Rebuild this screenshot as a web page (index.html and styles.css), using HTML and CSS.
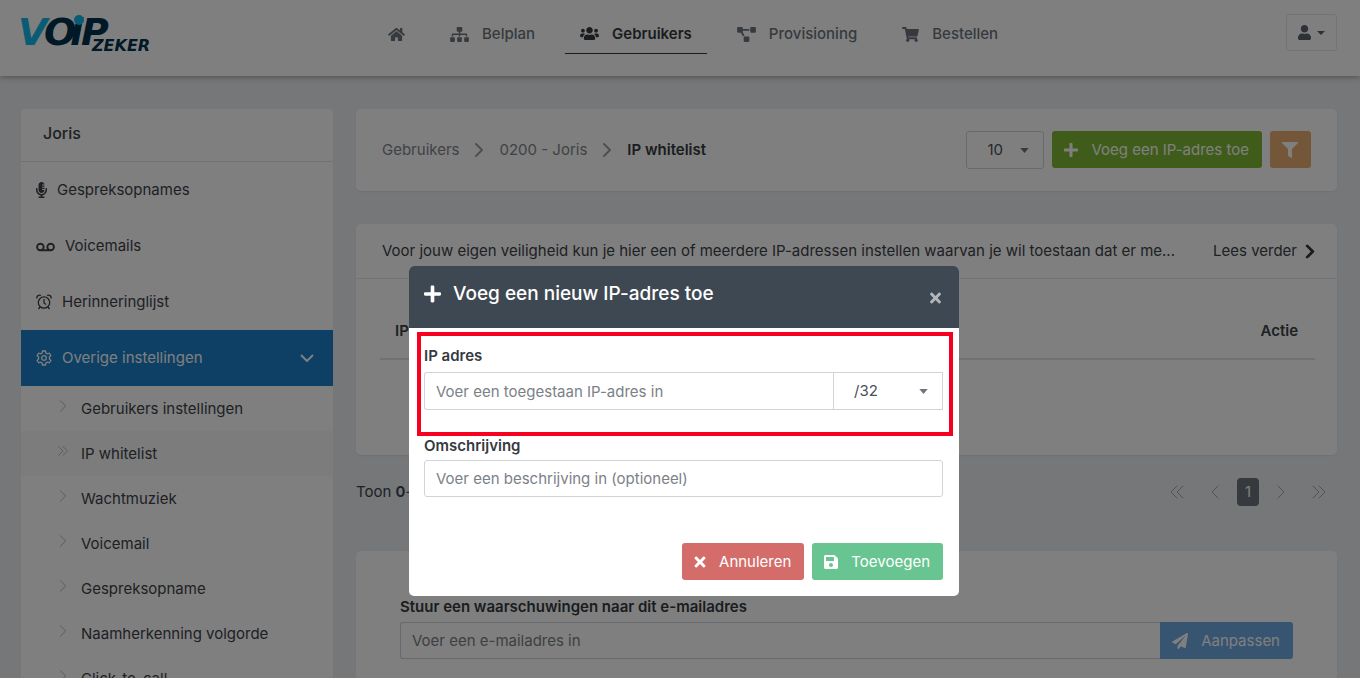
FILE: index.html
```html
<!DOCTYPE html>
<html lang="nl">
<head>
<meta charset="utf-8">
<title>VoIPZeker - IP whitelist</title>
<link rel="stylesheet" href="styles.css">
</head>
<body>
<svg class="sprite" aria-hidden="true">
  <symbol id="plus" viewBox="0 0 448 512"><path d="M416 208H272V64c0-17.67-14.33-32-32-32h-32c-17.67 0-32 14.33-32 32v144H32c-17.67 0-32 14.33-32 32v32c0 17.67 14.33 32 32 32h144v144c0 17.67 14.33 32 32 32h32c17.67 0 32-14.33 32-32V304h144c17.67 0 32-14.33 32-32v-32c0-17.67-14.33-32-32-32z"/></symbol>
  <symbol id="times" viewBox="0 0 352 512"><path d="M242.72 256l100.07-100.07c12.28-12.28 12.28-32.19 0-44.48l-22.24-22.24c-12.28-12.28-32.19-12.28-44.48 0L176 189.28 75.93 89.21c-12.28-12.28-32.19-12.28-44.48 0L9.21 111.45c-12.28 12.28-12.28 32.19 0 44.48L109.28 256 9.21 356.07c-12.28 12.28-12.28 32.19 0 44.48l22.24 22.24c12.28 12.28 32.2 12.28 44.48 0L176 322.72l100.07 100.07c12.28 12.28 32.2 12.28 44.48 0l22.24-22.24c12.28-12.28 12.28-32.19 0-44.48L242.72 256z"/></symbol>
  <symbol id="chevron" viewBox="0 0 10 16"><path d="M2 2l6 6-6 6" fill="none" stroke="currentColor" stroke-linecap="round" stroke-linejoin="round"/></symbol>
  <symbol id="double" viewBox="0 0 16 16"><path d="M2 2l6 6-6 6M8 2l6 6-6 6" fill="none" stroke="currentColor" stroke-linecap="round" stroke-linejoin="round"/></symbol>
</svg>

<header class="topbar">
  <a class="logo" href="#" aria-label="VoIPZeker">
    <svg width="136" height="40" viewBox="0 0 136 40">
      <text class="logo-word logo-navy" x="23" y="31">O</text>
      <text class="logo-word logo-cyan" x="-3" y="31">V</text>
      <text class="logo-word logo-navy" x="49" y="31">i</text>
      <text class="logo-word logo-navy" x="60" y="31">P</text>
      <circle class="logo-cyan" cx="58" cy="6" r="5"/>
      <text class="logo-sub logo-navy" x="71" y="37">ZEKER</text>
    </svg>
  </a>
  <nav class="nav">
    <a class="nav-link" href="#" aria-label="Home"><svg width="17" height="15" viewBox="0 0 576 512"><path d="M280.37 148.26L96 300.11V464a16 16 0 0 0 16 16l112.06-.29a16 16 0 0 0 15.92-16V368a16 16 0 0 1 16-16h64a16 16 0 0 1 16 16v95.64a16 16 0 0 0 16 16.05L464 480a16 16 0 0 0 16-16V300L295.67 148.26a12.19 12.19 0 0 0-15.3 0zM571.6 251.47L488 182.56V44.05a12 12 0 0 0-12-12h-56a12 12 0 0 0-12 12v72.61L318.47 43a48 48 0 0 0-61 0L4.34 251.47a12 12 0 0 0-1.6 16.9l25.5 31A12 12 0 0 0 45.15 301l235.22-193.74a12.19 12.19 0 0 1 15.3 0L530.9 301a12 12 0 0 0 16.9-1.6l25.5-31a12 12 0 0 0-1.7-16.93z"/></svg></a>
    <a class="nav-link" href="#"><svg width="19" height="15" viewBox="0 0 640 512"><path d="M128 352H32c-17.67 0-32 14.33-32 32v96c0 17.67 14.33 32 32 32h96c17.67 0 32-14.33 32-32v-96c0-17.67-14.33-32-32-32zm-24-80h192v48h48v-48h192v48h48v-57.59c0-21.17-17.23-38.41-38.41-38.41H344v-64h40c17.67 0 32-14.33 32-32V32c0-17.67-14.33-32-32-32H256c-17.67 0-32 14.33-32 32v96c0 17.67 14.33 32 32 32h40v64H94.41C73.23 224 56 241.23 56 262.41V320h48v-48zm264 80h-96c-17.67 0-32 14.33-32 32v96c0 17.67 14.33 32 32 32h96c17.67 0 32-14.33 32-32v-96c0-17.67-14.33-32-32-32zm240 0h-96c-17.67 0-32 14.33-32 32v96c0 17.67 14.33 32 32 32h96c17.67 0 32-14.33 32-32v-96c0-17.67-14.33-32-32-32z"/></svg>Belplan</a>
    <a class="nav-link active" href="#"><svg width="19" height="15" viewBox="0 0 640 512"><path d="M96 224c35.3 0 64-28.7 64-64s-28.7-64-64-64-64 28.7-64 64 28.7 64 64 64zm448 0c35.3 0 64-28.7 64-64s-28.7-64-64-64-64 28.7-64 64 28.7 64 64 64zm32 32h-64c-17.6 0-33.5 7.1-45.1 18.6 40.3 22.1 68.9 62 75.1 109.4h66c17.7 0 32-14.3 32-32v-32c0-35.3-28.7-64-64-64zm-256 0c61.9 0 112-50.1 112-112S381.9 32 320 32 208 82.1 208 144s50.1 112 112 112zm76.8 32h-8.3c-20.8 10-43.9 16-68.5 16s-47.6-6-68.5-16h-8.3C179.6 288 128 339.6 128 403.2V432c0 26.5 21.5 48 48 48h288c26.5 0 48-21.5 48-48v-28.8c0-63.6-51.6-115.2-115.2-115.2zm-223.7-13.4C161.5 263.1 145.6 256 128 256H64c-35.3 0-64 28.7-64 64v32c0 17.7 14.3 32 32 32h65.9c6.3-47.4 34.9-87.3 75.2-109.4z"/></svg>Gebruikers</a>
    <a class="nav-link" href="#"><svg width="19" height="15" viewBox="0 0 640 512"><path d="M384 320H256c-17.67 0-32 14.33-32 32v128c0 17.67 14.33 32 32 32h128c17.67 0 32-14.33 32-32V352c0-17.67-14.33-32-32-32zM192 32c0-17.67-14.33-32-32-32H32C14.33 0 0 14.33 0 32v128c0 17.67 14.33 32 32 32h95.72l73.16 128.04C211.98 300.98 232.4 288 256 288h.28L192 175.51V128h224V64H192V32zM608 0H480c-17.67 0-32 14.33-32 32v128c0 17.67 14.33 32 32 32h128c17.67 0 32-14.33 32-32V32c0-17.67-14.33-32-32-32z"/></svg>Provisioning</a>
    <a class="nav-link" href="#"><svg width="17" height="15" viewBox="0 0 576 512"><path d="M528.12 301.319l47.273-208C578.806 78.301 567.391 64 551.99 64H159.208l-9.166-44.81C147.758 8.021 137.93 0 126.529 0H24C10.745 0 0 10.745 0 24v16c0 13.255 10.745 24 24 24h69.883l70.248 343.435C147.325 417.1 136 435.222 136 456c0 30.928 25.072 56 56 56s56-25.072 56-56c0-15.674-6.447-29.835-16.824-40h209.647C430.447 426.165 424 440.326 424 456c0 30.928 25.072 56 56 56s56-25.072 56-56c0-22.172-12.888-41.332-31.579-50.405l5.517-24.276c3.413-15.018-8.002-29.319-23.403-29.319H218.117l-6.545-32h293.145c11.206 0 20.92-7.754 23.403-18.681z"/></svg>Bestellen</a>
  </nav>
  <button class="user-button" type="button" aria-label="Account"><svg width="13" height="15" viewBox="0 0 448 512"><path d="M224 256c70.7 0 128-57.3 128-128S294.7 0 224 0 96 57.3 96 128s57.3 128 128 128zm89.6 32h-16.7c-22.2 10.2-46.9 16-72.9 16s-50.6-5.8-72.9-16h-16.7C60.2 288 0 348.2 0 422.4V464c0 26.5 21.5 48 48 48h352c26.5 0 48-21.5 48-48v-41.6c0-74.2-60.2-134.4-134.4-134.4z"/></svg><svg width="8" height="4" viewBox="0 0 8 4"><path d="M0 0h8L4 4z"/></svg></button>
</header>

<div class="layout">
  <aside class="sidebar">
    <h2 class="sidebar-title">Joris</h2>
    <a class="side-link" href="#"><svg width="11" height="16" viewBox="0 0 352 512"><path fill-rule="evenodd" d="M176 352c53.02 0 96-42.98 96-96h-76v-32h76v-40h-76v-32h76v-40h-76V80h76C264 34 227 0 176 0 123 0 80 42.98 80 96v160c0 53.02 42.98 96 96 96zm160-160h-16c-8.84 0-16 7.16-16 16v48c0 74.8-64.49 134.82-140.79 127.38C96.71 376.89 48 317.11 48 250.3V208c0-8.84-7.16-16-16-16H16c-8.84 0-16 7.16-16 16v40.16c0 89.64 63.97 169.55 152 181.69V464H96c-8.84 0-16 7.16-16 16v16c0 8.84 7.16 16 16 16h160c8.84 0 16-7.16 16-16v-16c0-8.84-7.16-16-16-16h-56v-33.77C285.71 418.47 352 344.9 352 256v-48c0-8.84-7.16-16-16-16z"/></svg>Gespreksopnames</a>
    <a class="side-link" href="#"><svg width="19" height="15" viewBox="0 0 640 512"><path d="M496 128a144 144 0 0 0-119.74 224H263.74A144 144 0 1 0 144 416h352a144 144 0 0 0 0-288zM64 272a80 80 0 1 1 80 80 80 80 0 0 1-80-80zm432 80a80 80 0 1 1 80-80 80 80 0 0 1-80 80z"/></svg>Voicemails</a>
    <a class="side-link" href="#"><svg class="line-icon" width="16" height="16" viewBox="0 0 16 16"><circle cx="8" cy="8.500" r="5.700"/><path d="M8 5v4l2 1.500M4 13l-1.500 2M12 13l1.500 2M1 4.500C.3 2 3 .3 5 1.500M15 4.500C15.700 2 13 .3 11 1.500"/></svg>Herinneringlijst</a>
    <a class="side-link current" href="#"><svg class="line-icon" width="16" height="16" viewBox="0 0 16 16"><path d="M6.500 1h3l.4 2 1.500.9 2-.7 1.500 2.500L13.400 7.100v1.800l1.500 1.400-1.500 2.500-2-.7-1.500.9-.4 2h-3l-.4-2-1.500-.9-2 .7-1.500-2.500L2.600 8.900V7.100L1.100 5.700l1.500-2.500 2 .7L6.100 3z"/><circle cx="8" cy="8" r="2.300"/></svg>Overige instellingen<svg class="side-arrow" width="14" height="8" viewBox="0 0 14 8"><path d="M1 1l6 6 6-6"/></svg></a>
    <ul class="submenu">
      <li><a class="sub-link" href="#"><svg class="sub-icon" width="12" height="14"><use href="#chevron"/></svg>Gebruikers instellingen</a></li>
      <li><a class="sub-link selected" href="#"><svg class="sub-icon" width="12" height="14"><use href="#double"/></svg>IP whitelist</a></li>
      <li><a class="sub-link" href="#"><svg class="sub-icon" width="12" height="14"><use href="#chevron"/></svg>Wachtmuziek</a></li>
      <li><a class="sub-link" href="#"><svg class="sub-icon" width="12" height="14"><use href="#chevron"/></svg>Voicemail</a></li>
      <li><a class="sub-link" href="#"><svg class="sub-icon" width="12" height="14"><use href="#chevron"/></svg>Gespreksopname</a></li>
      <li><a class="sub-link" href="#"><svg class="sub-icon" width="12" height="14"><use href="#chevron"/></svg>Naamherkenning volgorde</a></li>
      <li><a class="sub-link" href="#"><svg class="sub-icon" width="12" height="14"><use href="#chevron"/></svg>Click-to-call</a></li>
    </ul>
  </aside>

  <main class="content">
    <section class="card toolbar">
      <nav class="breadcrumb">
        <a href="#">Gebruikers</a><svg width="10" height="16"><use href="#chevron"/></svg>
        <a href="#">0200 - Joris</a><svg width="10" height="16"><use href="#chevron"/></svg>
        <strong>IP whitelist</strong>
      </nav>
      <div class="actions">
        <div class="select-wrap page-size">
          <select aria-label="Aantal per pagina"><option>10</option><option>25</option></select>
          <svg class="caret" width="9" height="5" viewBox="0 0 10 6"><path d="M0 0h10L5 6z"/></svg>
        </div>
        <button class="btn btn-add" type="button"><svg width="14" height="16"><use href="#plus"/></svg>Voeg een IP-adres toe</button>
        <button class="btn btn-filter" type="button" aria-label="Filter"><svg width="16" height="16" viewBox="0 0 512 512"><path d="M487.976 0H24.028C2.71 0-8.047 25.866 7.058 40.971L192 225.941V432c0 7.831 3.821 15.17 10.237 19.662l80 55.98C298.02 518.69 320 507.493 320 487.98V225.941l184.947-184.97C520.021 25.896 509.338 0 487.976 0z"/></svg></button>
      </div>
    </section>

    <section class="card list">
      <div class="notice">
        <p class="notice-text">Voor jouw eigen veiligheid kun je hier een of meerdere IP-adressen instellen waarvan je wil toestaan dat er me...</p>
        <a class="more" href="#">Lees verder<svg width="10" height="15"><use href="#chevron"/></svg></a>
      </div>
      <table class="ip-table">
        <thead><tr><th>IP adres</th><th>Omschrijving</th><th class="right">Actie</th></tr></thead>
      </table>
    </section>

    <div class="list-footer">
      <p class="count">Toon <b>0</b>-<b>0</b> van <b>0</b></p>
      <nav class="pagination" aria-label="Pagina's">
        <a class="edge" href="#" aria-label="Eerste"><svg class="flip" width="16" height="16"><use href="#double"/></svg></a>
        <a href="#" aria-label="Vorige"><svg class="flip" width="10" height="16"><use href="#chevron"/></svg></a>
        <a class="page" href="#">1</a>
        <a href="#" aria-label="Volgende"><svg width="10" height="16"><use href="#chevron"/></svg></a>
        <a class="edge" href="#" aria-label="Laatste"><svg width="16" height="16"><use href="#double"/></svg></a>
      </nav>
    </div>

    <section class="card mail">
      <label class="label" for="mail">Stuur een waarschuwingen naar dit e-mailadres</label>
      <div class="input-group">
        <input class="input" id="mail" type="email" placeholder="Voer een e-mailadres in">
        <button class="btn btn-mail" type="button"><svg width="16" height="16" viewBox="0 0 512 512"><path d="M476 3.200L12.500 270.600c-18.100 10.400-15.800 35.600 2.200 43.200L121 358.400l287.300-253.200c5.500-4.900 13.300 2.600 8.600 8.300L176 407v80.500c0 23.600 28.500 32.900 42.500 15.800L282 426l124.600 52.200c14.200 6 30.400-2.900 33-18.200l72-432C515 7.800 493.300-6.800 476 3.200z"/></svg>Aanpassen</button>
      </div>
    </section>
  </main>
</div>

<div class="overlay">
  <div class="modal" role="dialog" aria-modal="true" aria-labelledby="modal-title">
    <div class="modal-header">
      <svg width="17" height="20"><use href="#plus"/></svg>
      <h1 class="modal-title" id="modal-title">Voeg een nieuw IP-adres toe</h1>
      <button class="close" type="button" aria-label="Sluiten"><svg width="11" height="16"><use href="#times"/></svg></button>
    </div>
    <form class="modal-body">
      <div class="field highlighted">
        <label class="label" for="ip">IP adres</label>
        <div class="input-group">
          <input class="input" id="ip" type="text" placeholder="Voer een toegestaan IP-adres in">
          <div class="select-wrap mask">
            <select aria-label="Subnetmasker"><option>/32</option><option>/24</option></select>
            <svg class="caret" width="9" height="5" viewBox="0 0 10 6"><path d="M0 0h10L5 6z"/></svg>
          </div>
        </div>
      </div>
      <div class="field">
        <label class="label" for="description">Omschrijving</label>
        <input class="input" id="description" type="text" placeholder="Voer een beschrijving in (optioneel)">
      </div>
      <div class="modal-actions">
        <button class="btn btn-cancel" type="button"><svg width="12" height="16"><use href="#times"/></svg>Annuleren</button>
        <button class="btn btn-save" type="button"><svg width="14" height="16" viewBox="0 0 448 512"><path d="M433.941 129.941l-83.882-83.882A48 48 0 0 0 316.118 32H48C21.490 32 0 53.490 0 80v352c0 26.510 21.490 48 48 48h352c26.510 0 48-21.490 48-48V163.882a48 48 0 0 0-14.059-33.941zM224 416c-35.346 0-64-28.654-64-64 0-35.346 28.654-64 64-64s64 28.654 64 64c0 35.346-28.654 64-64 64zm96-304.520V212c0 6.627-5.373 12-12 12H76c-6.627 0-12-5.373-12-12V108c0-6.627 5.373-12 12-12h228.520c3.183 0 6.235 1.264 8.485 3.515l3.480 3.480A11.996 11.996 0 0 1 320 111.480z"/></svg>Toevoegen</button>
      </div>
    </form>
  </div>
</div>
</body>
</html>
```
FILE: styles.css
```css
* { box-sizing: border-box; }

body {
  margin: 0;
  height: 100vh;
  overflow: hidden;
  background: #ebeef3;
  color: #3c4248;
  font: 400 15px/20px Inter, "Liberation Sans", sans-serif;
}

a { color: inherit; text-decoration: none; }
svg { flex: none; fill: currentColor; }
button, input, select { font: inherit; }
.sprite { position: absolute; width: 0; height: 0; }

/* Top bar */
.topbar {
  display: grid;
  grid-template-columns: 352px 1fr auto;
  align-items: start;
  height: 76px;
  padding: 14px 23px 0 21px;
  background: #fff;
  box-shadow: 0 1px 6px rgba(0, 0, 0, .35);
}
.logo svg { display: block; overflow: visible; }
.logo-word { font: italic 700 38px "DejaVu Sans", sans-serif; }
.logo-sub { font: italic 700 16px "DejaVu Sans", sans-serif; }
.logo-navy { fill: #03324e; }
.logo-cyan { fill: #12b8e8; }
.nav { display: flex; gap: 15px; }
.nav-link {
  display: flex;
  align-items: center;
  gap: 13px;
  height: 40px;
  padding: 0 15px;
  color: #6c757d;
  font-weight: 500;
}
.nav-link.active { color: #343a40; font-weight: 600; border-bottom: 1px solid #343a40; }
.user-button {
  display: flex;
  align-items: center;
  justify-content: center;
  gap: 6px;
  width: 51px;
  height: 37px;
  border: 1px solid #e2e6ea;
  border-radius: 3px;
  background: #fff;
  color: #5c656e;
}

/* Page grid */
.layout {
  display: grid;
  grid-template-columns: 312px minmax(0, 1fr);
  gap: 23px;
  padding: 33px 23px 0 21px;
}

/* Sidebar */
.sidebar { background: #fff; border-radius: 4px; align-self: start; }
.sidebar-title {
  margin: 0;
  padding: 14px 22px 18px;
  border-bottom: 1px solid #e3e7ee;
  font-size: 16px;
  font-weight: 500;
  line-height: 20px;
}
.side-link {
  display: flex;
  align-items: center;
  gap: 10px;
  height: 56px;
  padding: 0 19px 0 15px;
}
.side-link.current { background: #1a80c8; color: #fff; }
.line-icon { fill: none; stroke: currentColor; stroke-width: 1.300; }
.side-arrow { margin-left: auto; fill: none; stroke: currentColor; stroke-width: 2; }
.submenu { margin: 0; padding: 0; list-style: none; }
.sub-link {
  display: flex;
  align-items: center;
  gap: 12px;
  height: 45px;
  padding: 0 36px;
}
.sub-link.selected { background: #f8f8f8; }
.sub-icon { color: #a4abb2; margin-bottom: 6px; }

/* Cards */
.card { background: #fff; border-radius: 5px; box-shadow: 0 1px 2px rgba(0, 0, 0, .06); }
.toolbar {
  display: flex;
  justify-content: space-between;
  align-items: center;
  height: 82px;
  padding: 0 26px;
}
.breadcrumb { display: flex; align-items: center; gap: 15px; color: #7d858c; }
.breadcrumb svg { color: #98a0a8; stroke-width: 2; }
.breadcrumb strong { color: #343a40; font-weight: 600; }
.actions { display: flex; gap: 8px; }

.btn {
  display: flex;
  align-items: center;
  justify-content: center;
  gap: 13px;
  height: 37px;
  padding: 0 13px 0 12px;
  border: 0;
  border-radius: 3px;
  color: #fff;
  white-space: nowrap;
}
.btn-add { background: #7fb935; }
.btn-filter { background: #e8ae70; }
.btn-mail { background: #6ea9e2; border-radius: 0 3px 3px 0; }
.btn-cancel { background: #d46d6a; }
.btn-save { background: #68c591; }

.select-wrap { position: relative; }
.select-wrap select {
  width: 100%;
  height: 38px;
  padding: 0 20px;
  border: 1px solid #ced4da;
  border-radius: 3px;
  background: #fff;
  color: #495057;
  appearance: none;
}
.caret { position: absolute; right: 15px; top: 17px; color: #6c757d; }
.page-size { width: 78px; }

.list { margin-top: 33px; height: 231px; padding-bottom: 96px; }
.notice {
  display: flex;
  align-items: center;
  gap: 16px;
  height: 55px;
  padding: 0 22px 0 26px;
  border-bottom: 1px solid #e6e9ed;
}
.notice-text {
  flex: 1;
  margin: 0;
  overflow: hidden;
  text-overflow: ellipsis;
  white-space: nowrap;
}
.more { display: flex; align-items: center; gap: 8px; }
.more svg { stroke-width: 3; color: #343a40; }
.ip-table { width: calc(100% - 46px); margin: 24px 22px 0 24px; border-collapse: collapse; }
.ip-table th {
  height: 56px;
  padding: 0 17px 0 15px;
  border-bottom: 2px solid #dee2e6;
  text-align: left;
  font-weight: 600;
}
.ip-table .right { text-align: right; }

.list-footer { display: flex; justify-content: space-between; align-items: center; height: 74px; }
.count { margin: 0; }
.count b, .label { font-weight: 600; }
.pagination { display: flex; align-items: center; gap: 17px; padding-right: 2px; color: #a0a7ae; }
.pagination a { display: flex; }
.pagination .edge { padding: 0 8px; }
.pagination .page {
  justify-content: center;
  width: 22px;
  padding: 4px 0;
  border-radius: 4px;
  background: #6c757d;
  color: #fff;
}
.flip { transform: scaleX(-1); }

/* Warning mail */
.mail { margin-top: 22px; padding: 46px 44px 60px; }
.label { display: block; color: #343a40; }
.input {
  display: block;
  width: 100%;
  height: 37px;
  padding: 0 11px;
  border: 1px solid #ced4da;
  border-radius: 3px;
  background: #fff;
  color: #495057;
}
.input::placeholder { color: #7b8187; opacity: 1; }
.input-group { display: flex; margin-top: 5px; }
.input-group .input { flex: 1; min-width: 0; border-radius: 3px 0 0 3px; }
.mail .input { border-right: 0; }

/* Modal */
.overlay {
  position: fixed;
  inset: 0;
  display: flex;
  justify-content: center;
  align-items: flex-start;
  padding: 266px 0 0 8px;
  background: rgba(0, 0, 0, .5);
}
.modal { width: 550px; border-radius: 5px; background: #fff; overflow: hidden; }
.modal-header {
  display: flex;
  align-items: center;
  gap: 12px;
  height: 62px;
  padding: 0 18px 7px 15px;
  background: #3e4853;
  color: #fff;
}
.modal-title { flex: 1; margin: 0; font-size: 19px; font-weight: 500; line-height: 24px; }
.close { display: flex; margin-top: 8px; padding: 0; border: 0; background: none; color: #b2b6ba; }
.modal-body { padding: 4px 16px 16px 15px; }
.highlighted { margin: 0 -10px 0 -7px; padding: 10px 6px 22px 3px; border: 4px solid #f70020; }
.highlighted .input-group { margin-top: 6px; }
.highlighted .input { height: 38px; border-right: 0; }
.mask { width: 110px; }
.mask select { border-radius: 0; }
.field > .input { margin-top: 4px; }
.modal-actions { display: flex; justify-content: flex-end; gap: 8px; margin-top: 46px; }
```
